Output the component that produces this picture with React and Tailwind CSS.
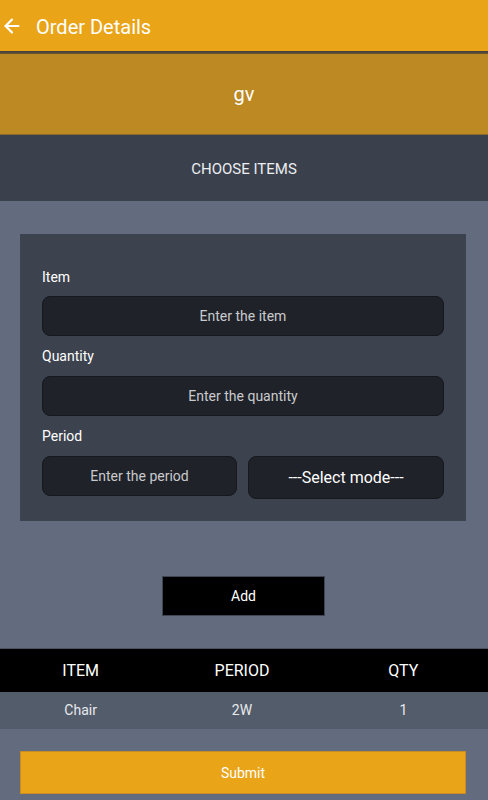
import { ArrowLeft } from 'lucide-react'

const rows = [{ item: 'Chair', period: '2W', qty: '1' }]

function Field({ placeholder, className = '' }) {
  return (
    <div
      className={`h-[40px] flex items-center justify-center rounded-[8px] bg-[#202229] border border-[#16181d] text-[14px] text-[#c9cacd] ${className}`}
    >
      {placeholder}
    </div>
  )
}

export default function App() {
  return (
    <div
      className="w-[488px] h-[800px] overflow-hidden bg-[#626c7e] flex flex-col"
      style={{ fontFamily: 'Roboto, "Noto Sans", sans-serif' }}
    >
      <header className="h-[51px] bg-[#e9a418] flex items-center pl-[1px] gap-[13px] text-white">
        <ArrowLeft size={22} strokeWidth={2.4} />
        <h1 className="text-[20px] pt-[2px]">Order Details</h1>
      </header>
      <div className="h-[3px] bg-gradient-to-b from-[#3d3d3d] to-[#6b5a2e]" />

      <div className="h-[81px] bg-[#bd8923] flex items-center justify-center text-white text-[20px] border-b border-[#8a6a2a]">
        gv
      </div>

      <div className="h-[66px] bg-[#3a404c] flex items-center justify-center text-[15px] text-[#eceef1] pt-[2px]">
        CHOOSE ITEMS
      </div>

      <div className="pt-[33px] px-[20px]">
        <div className="w-[446px] h-[287px] bg-[#3c424e] px-[22px] pt-[35px]">
          <p className="text-[14px] text-white leading-[16px]">Item</p>
          <Field placeholder="Enter the item" className="mt-[11px]" />
          <p className="text-[14px] text-white leading-[16px] mt-[12px]">Quantity</p>
          <Field placeholder="Enter the quantity" className="mt-[12px]" />
          <p className="text-[14px] text-white leading-[16px] mt-[12px]">Period</p>
          <div className="mt-[12px] flex gap-[11px]">
            <Field placeholder="Enter the period" className="w-[195px]" />
            <div className="w-[196px] h-[43px] flex items-center justify-center rounded-[8px] bg-[#202229] border border-[#16181d] text-[16px] text-white">
              ---Select mode---
            </div>
          </div>
        </div>
      </div>

      <div className="flex mt-[55px] pl-[162px]">
        <button className="w-[163px] h-[40px] bg-black border border-[#3f4552] text-white text-[14px] pt-[1px]">
          Add
        </button>
      </div>

      <div className="mt-[32px]">
        <div className="h-[44px] bg-black text-white text-[16px] border-t border-[#4a5262] grid grid-cols-3 items-center text-center pr-[4px] pt-[1px]">
          <span>ITEM</span>
          <span>PERIOD</span>
          <span>QTY</span>
        </div>
        {rows.map((r) => (
          <div
            key={r.item}
            className="h-[37px] bg-[#535c6b] text-[14px] text-[#e8e9eb] grid grid-cols-3 items-center text-center pr-[4px]"
          >
            <span>{r.item}</span>
            <span>{r.period}</span>
            <span>{r.qty}</span>
          </div>
        ))}
      </div>

      <div className="px-[20px] mt-[22px]">
        <button className="w-[446px] h-[43px] bg-[#e9a418] border border-[#c88c20] text-white text-[14px] pt-[1px]">
          Submit
        </button>
      </div>
    </div>
  )
}
